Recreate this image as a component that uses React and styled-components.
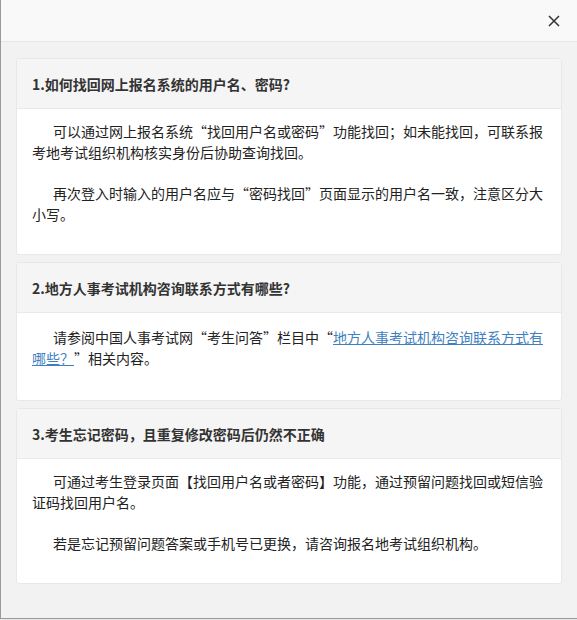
import React from "react";
import styled, { createGlobalStyle } from "styled-components";

const GlobalStyle = createGlobalStyle`
  html, body {
    margin: 0;
    padding: 0;
    background: #e9e9e9;
  }
  body {
    font-family: "Noto Sans CJK SC", "Noto Sans", sans-serif;
  }
`;

const faqs = [
  {
    title: "1.如何找回网上报名系统的用户名、密码?",
    paras: [
      ["可以通过网上报名系统“找回用户名或密码”功能找回；如未能找回，可联系报考地考试组织机构核实身份后协助查询找回。"],
      ["再次登入时输入的用户名应与“密码找回”页面显示的用户名一致，注意区分大小写。"],
    ],
  },
  {
    title: "2.地方人事考试机构咨询联系方式有哪些?",
    roomy: true,
    paras: [
      [
        "请参阅中国人事考试网“考生问答”栏目中“",
        { link: "地方人事考试机构咨询联系方式有哪些？" },
        "”相关内容。",
      ],
    ],
  },
  {
    title: "3.考生忘记密码，且重复修改密码后仍然不正确",
    paras: [
      ["可通过考生登录页面【找回用户名或者密码】功能，通过预留问题找回或短信验证码找回用户名。"],
      ["若是忘记预留问题答案或手机号已更换，请咨询报名地考试组织机构。"],
    ],
  },
];

const App = () => {
  return (
    <>
      <GlobalStyle />
      <Modal>
        <ModalHeader>
          <CloseButton aria-label="close">
            <svg width="12" height="12" viewBox="0 0 12 12">
              <path d="M1 1L11 11M11 1L1 11" stroke="#333" strokeWidth="1.5" fill="none" />
            </svg>
          </CloseButton>
        </ModalHeader>
        <ModalBody>
          {faqs.map(faq => (
            <Card key={faq.title}>
              <CardHeader>{faq.title}</CardHeader>
              <CardBody $roomy={faq.roomy}>
                {faq.paras.map((parts, i) => (
                  <Para key={i}>
                    {parts.map((part, j) =>
                      typeof part === "string" ? (
                        <React.Fragment key={j}>{part}</React.Fragment>
                      ) : (
                        <Link key={j} href="#">
                          {part.link}
                        </Link>
                      )
                    )}
                  </Para>
                ))}
              </CardBody>
            </Card>
          ))}
        </ModalBody>
      </Modal>
    </>
  );
};

const Modal = styled.div`
  width: 576px;
  height: 618px;
  background: #f2f2f2;
  border-left: 1px solid #9a9a9a;
  border-bottom: 1px solid #9a9a9a;
  display: flex;
  flex-direction: column;
`;

const ModalHeader = styled.div`
  height: 41px;
  background: #f9f9f9;
  border-bottom: 1px solid #e6e6e6;
  display: flex;
  align-items: center;
  justify-content: flex-end;
  padding-right: 17px;
  flex-shrink: 0;
`;

const CloseButton = styled.button`
  border: none;
  background: transparent;
  padding: 0;
  width: 12px;
  height: 12px;
  display: flex;
  cursor: pointer;
`;

const ModalBody = styled.div`
  padding: 16px 15px 0 15px;
  display: flex;
  flex-direction: column;
  gap: 7px;
`;

const Card = styled.section`
  background: #fff;
  border: 1px solid #e8e8e8;
  border-radius: 3px;
  overflow: hidden;
`;

const CardHeader = styled.h3`
  margin: 0;
  height: 49px;
  padding: 0 15px;
  display: flex;
  align-items: center;
  background: #f5f5f5;
  border-bottom: 1px solid #eaeaea;
  font-size: 14px;
  font-weight: 700;
  color: #333;
`;

const CardBody = styled.div`
  padding: ${p => (p.$roomy ? "14px 15px 11px" : "12px 15px 9px")};
`;

const Para = styled.p`
  margin: 0 0 20px;
  font-size: 14px;
  line-height: 21px;
  color: #222;
  text-indent: 21px;
`;

const Link = styled.a`
  color: #3f7fc0;
  text-decoration: underline;
`;

export default App;
